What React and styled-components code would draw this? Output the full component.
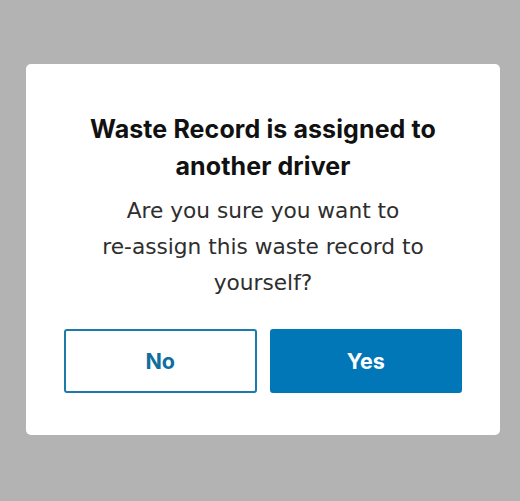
import React from "react";
import styled, { createGlobalStyle } from "styled-components";

const GlobalStyle = createGlobalStyle`
  html, body {
    margin: 0;
    padding: 0;
    background: #b3b3b3;
  }
  body {
    font-family: "Inter", "Noto Sans", sans-serif;
  }
`;

export default function App() {
  return (
    <>
      <GlobalStyle />
      <Styled.Page>
        <Styled.Card role="dialog" aria-modal="true">
          <Styled.Title>
            Waste Record is assigned to
            <br />
            another driver
          </Styled.Title>
          <Styled.Message>
            Are you sure you want to
            <br />
            re-assign this waste record to
            <br />
            yourself?
          </Styled.Message>
          <Styled.Actions>
            <Styled.Button>No</Styled.Button>
            <Styled.Button $primary>Yes</Styled.Button>
          </Styled.Actions>
        </Styled.Card>
      </Styled.Page>
    </>
  );
}

const Styled = {
  Page: styled.div`
    width: 520px;
    height: 501px;
    box-sizing: border-box;
    padding: 64px 20px 0 26px;
    display: flex;
    align-items: flex-start;
  `,
  Card: styled.div`
    flex: 1;
    height: 371px;
    box-sizing: border-box;
    background: #ffffff;
    border-radius: 5px;
    padding: 47px 38px 0;
    display: flex;
    flex-direction: column;
    align-items: center;
  `,
  Title: styled.h2`
    margin: 0;
    font-size: 25px;
    line-height: 37px;
    font-weight: 700;
    letter-spacing: 0.1px;
    color: #111111;
    text-align: center;
  `,
  Message: styled.p`
    margin: 8px 0 0;
    font-family: "DejaVu Sans", "Noto Sans", sans-serif;
    font-size: 21.7px;
    line-height: 36px;
    font-weight: 400;
    color: #2e2e2e;
    text-align: center;
  `,
  Actions: styled.div`
    align-self: stretch;
    margin-top: 28px;
    display: grid;
    grid-template-columns: 1fr 1fr;
    gap: 13px;
  `,
  Button: styled.button`
    height: 64px;
    border-radius: 3px;
    border: 2px solid ${(p) => (p.$primary ? "#0277b8" : "#1d7aad")};
    background: ${(p) => (p.$primary ? "#0277b8" : "#ffffff")};
    color: ${(p) => (p.$primary ? "#ffffff" : "#0e6e9e")};
    font-family: inherit;
    font-size: 21.5px;
    font-weight: 700;
    cursor: pointer;
  `,
};
